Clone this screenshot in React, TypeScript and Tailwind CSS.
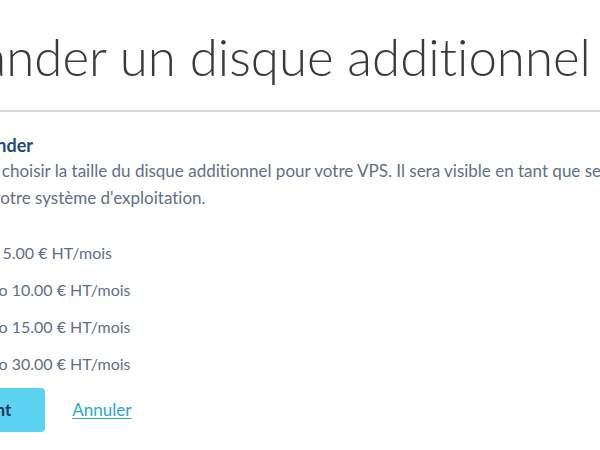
import React from "react";

const options = [
  { size: "10 Go", price: "5.00 € HT/mois" },
  { size: "100 Go", price: "10.00 € HT/mois" },
  { size: "200 Go", price: "15.00 € HT/mois" },
  { size: "500 Go", price: "30.00 € HT/mois" },
];

export default function App() {
  return (
    <div className="w-[600px] h-[450px] overflow-hidden bg-white font-['Lato',sans-serif] [font-variant-ligatures:none]">
      <h1 className="pt-[31px] -ml-[163px] whitespace-nowrap text-[51px] leading-[51px] font-light text-[#3a3a3a]">
        Commander un disque additionnel
      </h1>
      <div className="mt-[28px] h-[2px] w-full bg-[#dadada]" />
      <div className="w-[800px]">
        <h2 className="mt-[23px] -ml-[65px] text-[18px] leading-[21px] font-bold text-[#1d4b7c]">Commander</h2>
        <p className="mt-[1px] -ml-[47px] [text-indent:-13px] text-[17px] leading-[27px] text-[#5f6f89] whitespace-nowrap">
          Veuillez choisir la taille du disque additionnel pour votre VPS. Il sera visible en tant que second disque
          <br />
          dans votre système d'exploitation.
        </p>
        <div className="mt-[23px] -ml-[61px] flex flex-col">
          {options.map((o, i) => (
            <label key={i} className="flex h-[37px] items-center gap-[3px] text-[16px] text-[#5f6f89] whitespace-nowrap">
              <input type="radio" name="disk" defaultChecked={i === 0} className="m-0 h-[13px] w-[13px]" />
              <span>
                {o.size} {o.price}
              </span>
            </label>
          ))}
        </div>
        <div className="mt-[6px] -ml-[72px] flex items-center gap-[27px]">
          <button className="h-[44px] rounded-[4px] bg-[#5bd3f1] pl-[27px] pr-[34px] text-[17px] font-bold text-[#1b3a5e]">
            Suivant
          </button>
          <a href="#" className="text-[17px] text-[#2aa7d2] underline underline-offset-2">
            Annuler
          </a>
        </div>
      </div>
    </div>
  );
}
